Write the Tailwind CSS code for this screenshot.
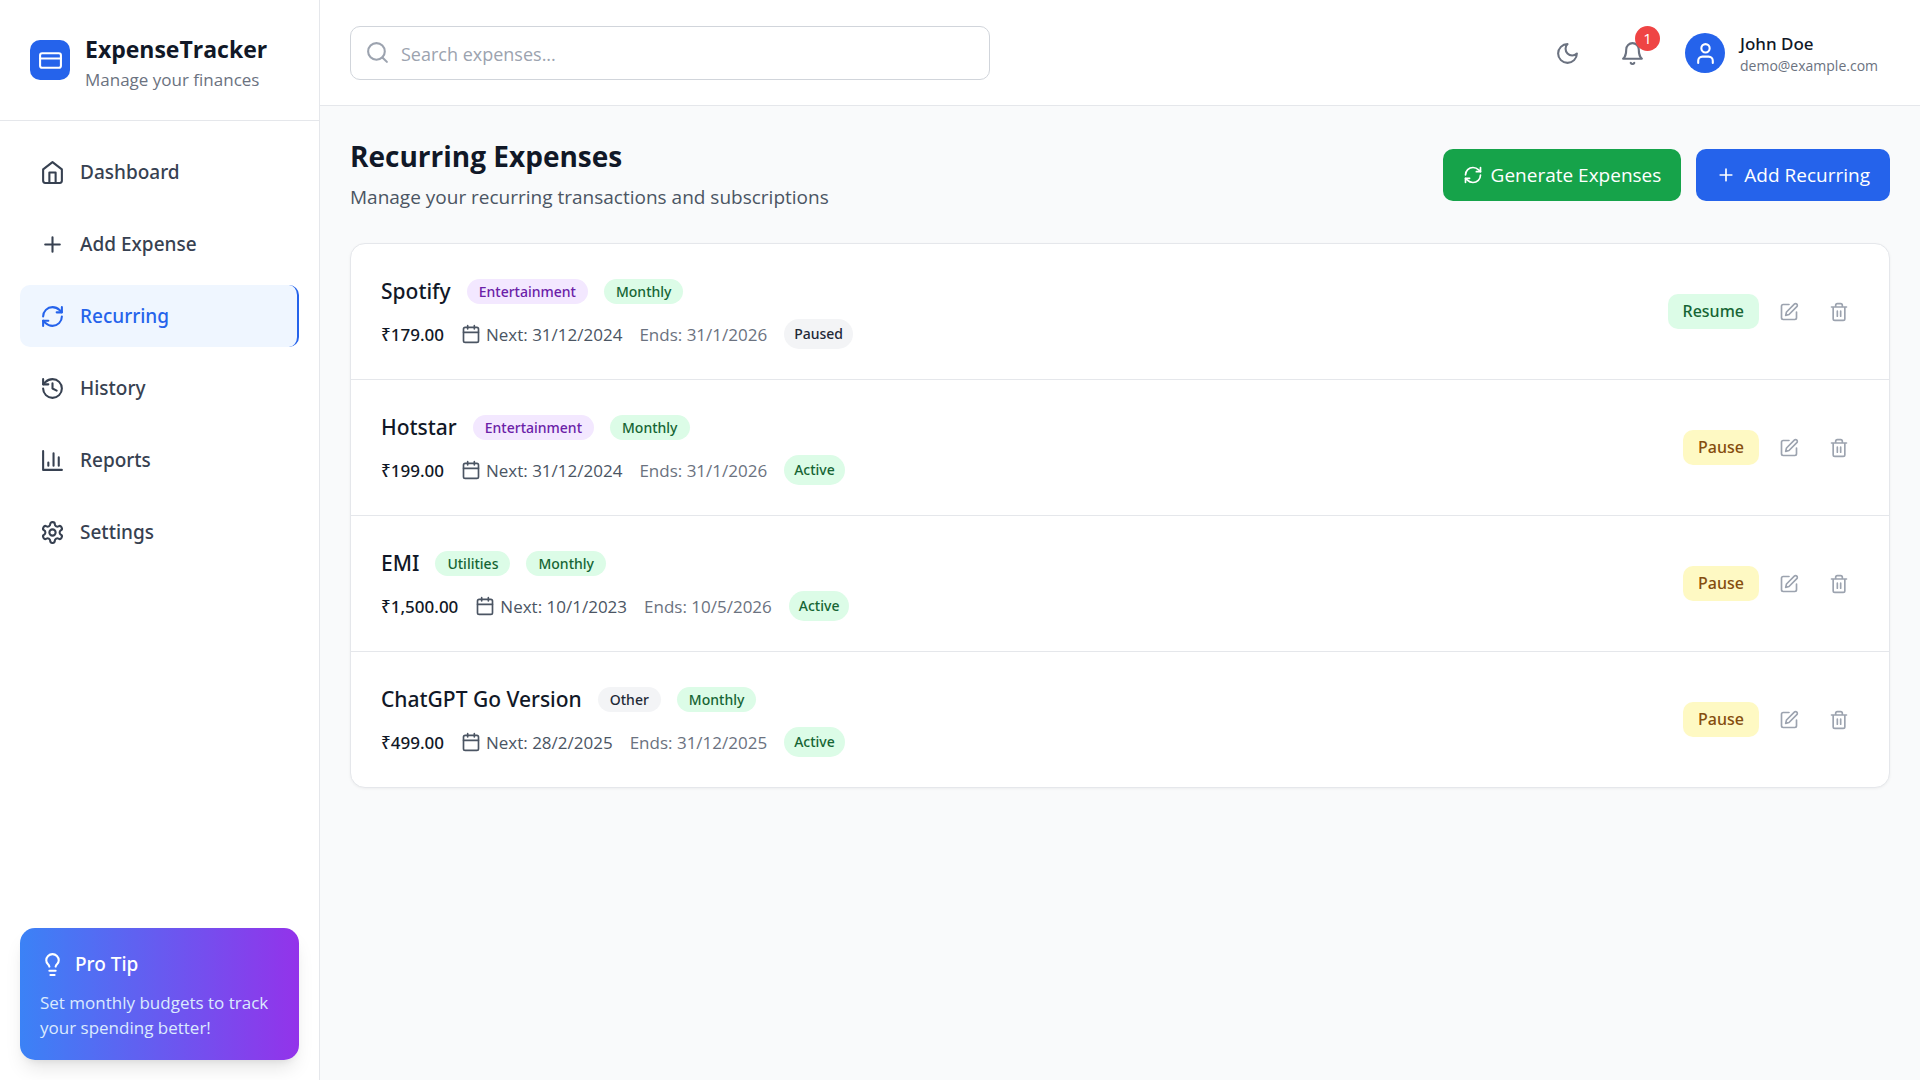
<!DOCTYPE html>
<html lang="en">
<head>
<meta charset="utf-8">
<meta name="viewport" content="width=device-width, initial-scale=1">
<title>ExpenseTracker</title>
<script src="https://cdn.jsdelivr.net/npm/@tailwindcss/browser@4"></script>
</head>
<body class="font-['Open_Sans','Noto_Sans',sans-serif] text-[#111827]">
<svg class="hidden" aria-hidden="true">
  <symbol id="card" viewBox="0 0 24 24"><rect x="2" y="5" width="20" height="14" rx="2"/><path d="M2 10h20"/></symbol>
  <symbol id="home" viewBox="0 0 24 24"><path d="m3 9 9-7 9 7v11a2 2 0 0 1-2 2H5a2 2 0 0 1-2-2z"/><path d="M9 22V12h6v10"/></symbol>
  <symbol id="plus" viewBox="0 0 24 24"><path d="M5 12h14M12 5v14"/></symbol>
  <symbol id="refresh" viewBox="0 0 24 24"><path d="M3 12a9 9 0 0 1 9-9 9.75 9.75 0 0 1 6.74 2.74L21 8"/><path d="M21 3v5h-5"/><path d="M21 12a9 9 0 0 1-9 9 9.75 9.75 0 0 1-6.74-2.74L3 16"/><path d="M8 16H3v5"/></symbol>
  <symbol id="history" viewBox="0 0 24 24"><path d="M3 12a9 9 0 1 0 9-9 9.75 9.75 0 0 0-6.74 2.74L3 8"/><path d="M3 3v5h5"/><path d="M12 7v5l4 2"/></symbol>
  <symbol id="chart" viewBox="0 0 24 24"><path d="M3 3v18h18M18 17V9M13 17V5M8 17v-3"/></symbol>
  <symbol id="settings" viewBox="0 0 24 24"><path d="M12.22 2h-.44a2 2 0 0 0-2 2v.18a2 2 0 0 1-1 1.73l-.43.25a2 2 0 0 1-2 0l-.15-.08a2 2 0 0 0-2.73.73l-.22.38a2 2 0 0 0 .73 2.73l.15.1a2 2 0 0 1 1 1.72v.51a2 2 0 0 1-1 1.74l-.15.09a2 2 0 0 0-.73 2.73l.22.38a2 2 0 0 0 2.73.73l.15-.08a2 2 0 0 1 2 0l.43.25a2 2 0 0 1 1 1.73V20a2 2 0 0 0 2 2h.44a2 2 0 0 0 2-2v-.18a2 2 0 0 1 1-1.73l.43-.25a2 2 0 0 1 2 0l.15.08a2 2 0 0 0 2.73-.73l.22-.39a2 2 0 0 0-.73-2.73l-.15-.08a2 2 0 0 1-1-1.74v-.5a2 2 0 0 1 1-1.74l.15-.09a2 2 0 0 0 .73-2.73l-.22-.38a2 2 0 0 0-2.73-.73l-.15.08a2 2 0 0 1-2 0l-.43-.25a2 2 0 0 1-1-1.73V4a2 2 0 0 0-2-2z"/><circle cx="12" cy="12" r="3"/></symbol>
  <symbol id="bulb" viewBox="0 0 24 24"><path d="M15 14c.2-1 .7-1.7 1.5-2.5 1-.9 1.5-2.2 1.5-3.5A6 6 0 0 0 6 8c0 1 .2 2.2 1.5 3.5.7.7 1.3 1.5 1.5 2.5"/><path d="M9 18h6M10 22h4"/></symbol>
  <symbol id="search" viewBox="0 0 24 24"><circle cx="11" cy="11" r="8"/><path d="m21 21-4.3-4.3"/></symbol>
  <symbol id="moon" viewBox="0 0 24 24"><path d="M12 3a6 6 0 0 0 9 9 9 9 0 1 1-9-9Z"/></symbol>
  <symbol id="bell" viewBox="0 0 24 24"><path d="M6 8a6 6 0 0 1 12 0c0 7 3 9 3 9H3s3-2 3-9"/><path d="M10.3 21a1.94 1.94 0 0 0 3.4 0"/></symbol>
  <symbol id="user" viewBox="0 0 24 24"><path d="M19 21v-2a4 4 0 0 0-4-4H9a4 4 0 0 0-4 4v2"/><circle cx="12" cy="7" r="4"/></symbol>
  <symbol id="calendar" viewBox="0 0 24 24"><rect x="3" y="4" width="18" height="18" rx="2"/><path d="M16 2v4M8 2v4M3 10h18"/></symbol>
  <symbol id="edit" viewBox="0 0 24 24"><path d="M12 3H5a2 2 0 0 0-2 2v14a2 2 0 0 0 2 2h14a2 2 0 0 0 2-2v-7"/><path d="M18.375 2.625a2.121 2.121 0 1 1 3 3L12 15l-4 1 1-4Z"/></symbol>
  <symbol id="trash" viewBox="0 0 24 24"><path d="M3 6h18M19 6v14c0 1-1 2-2 2H7c-1 0-2-1-2-2V6M8 6V4c0-1 1-2 2-2h4c1 0 2 1 2 2v2M10 11v6M14 11v6"/></symbol>
</svg>

<div class="flex min-h-screen bg-[#f9fafb]">
  <aside class="flex w-80 shrink-0 flex-col border-r border-[#e5e7eb] bg-white">
    <div class="flex h-[121px] items-center gap-[15px] border-b border-[#e5e7eb] px-[30px]">
      <div class="flex size-10 items-center justify-center rounded-[10px] bg-[#2563eb] text-white">
        <svg class="size-[25px] fill-none stroke-current stroke-2 [stroke-linecap:round] [stroke-linejoin:round]"><use href="#card"/></svg>
      </div>
      <div class="pt-[3px]">
        <p class="text-[23px] leading-[35px] font-bold">ExpenseTracker</p>
        <p class="text-[17px] leading-[25px] text-[#6b7280]">Manage your finances</p>
      </div>
    </div>
    <nav class="flex flex-col gap-[10px] p-5 font-['Noto_Sans',sans-serif] text-[19px] leading-[32px] font-medium text-[#374151]">
      <a href="#" class="flex items-center gap-[15px] rounded-[10px] px-5 py-[15px]"><svg class="size-[25px] fill-none stroke-current stroke-2 [stroke-linecap:round] [stroke-linejoin:round]"><use href="#home"/></svg>Dashboard</a>
      <a href="#" class="flex items-center gap-[15px] rounded-[10px] px-5 py-[15px]"><svg class="size-[25px] fill-none stroke-current stroke-2 [stroke-linecap:round] [stroke-linejoin:round]"><use href="#plus"/></svg>Add Expense</a>
      <a href="#" aria-current="page" class="flex items-center gap-[15px] rounded-[10px] border-r-2 border-[#2563eb] bg-[#eff6ff] px-5 py-[15px] text-[#2563eb]"><svg class="size-[25px] fill-none stroke-current stroke-2 [stroke-linecap:round] [stroke-linejoin:round]"><use href="#refresh"/></svg>Recurring</a>
      <a href="#" class="flex items-center gap-[15px] rounded-[10px] px-5 py-[15px]"><svg class="size-[25px] fill-none stroke-current stroke-2 [stroke-linecap:round] [stroke-linejoin:round]"><use href="#history"/></svg>History</a>
      <a href="#" class="flex items-center gap-[15px] rounded-[10px] px-5 py-[15px]"><svg class="size-[25px] fill-none stroke-current stroke-2 [stroke-linecap:round] [stroke-linejoin:round]"><use href="#chart"/></svg>Reports</a>
      <a href="#" class="flex items-center gap-[15px] rounded-[10px] px-5 py-[15px]"><svg class="size-[25px] fill-none stroke-current stroke-2 [stroke-linecap:round] [stroke-linejoin:round]"><use href="#settings"/></svg>Settings</a>
    </nav>
    <div class="mt-auto p-5">
      <section class="rounded-[15px] bg-linear-to-r/srgb from-[#3b82f6] to-[#9333ea] p-5 text-white shadow-[0_12px_19px_-4px_rgba(0,0,0,0.1),0_5px_8px_-5px_rgba(0,0,0,0.1)]">
        <h2 class="mb-[10px] flex items-center gap-[10px] font-['Noto_Sans',sans-serif] text-[19px] leading-[32px] font-medium"><svg class="size-[25px] fill-none stroke-current stroke-2 [stroke-linecap:round] [stroke-linejoin:round]"><use href="#bulb"/></svg>Pro Tip</h2>
        <p class="text-[17px] leading-[25px] text-[#dbeafe]">Set monthly budgets to track your spending better!</p>
      </section>
    </div>
  </aside>

  <div class="flex min-w-0 flex-1 flex-col">
    <header class="flex items-center justify-between border-b border-[#e5e7eb] bg-white pt-[26px] pr-10 pb-[25px] pl-[30px]">
      <div class="relative w-full max-w-[640px]">
        <svg class="absolute top-[14px] left-[15px] size-[25px] fill-none stroke-[#9ca3af] stroke-2 [stroke-linecap:round] [stroke-linejoin:round]"><use href="#search"/></svg>
        <input type="search" aria-label="Search expenses" placeholder="Search expenses..." class="block h-[54px] w-full rounded-[10px] border border-[#d1d5db] bg-white pt-px pr-5 pl-[50px] text-[18px] placeholder:text-[#9ca3af]">
      </div>
      <div class="flex items-center">
        <button type="button" aria-label="Toggle dark mode" class="flex size-[45px] items-center justify-center text-[#6b7280]"><svg class="size-[25px] fill-none stroke-current stroke-2 [stroke-linecap:round] [stroke-linejoin:round]"><use href="#moon"/></svg></button>
        <button type="button" aria-label="Notifications" class="relative ml-5 flex size-[45px] items-center justify-center text-[#6b7280]"><svg class="size-[25px] fill-none stroke-current stroke-2 [stroke-linecap:round] [stroke-linejoin:round]"><use href="#bell"/></svg><span class="absolute -top-[5px] -right-[5px] flex size-[25px] items-center justify-center rounded-full bg-[#ef4444] text-[15px] text-white">1</span></button>
        <button type="button" class="ml-[30px] flex items-center gap-[15px] text-left">
          <span class="flex size-10 items-center justify-center rounded-full bg-[#2563eb] text-white"><svg class="size-[25px] fill-none stroke-current stroke-2 [stroke-linecap:round] [stroke-linejoin:round]"><use href="#user"/></svg></span>
          <span class="min-w-[140px]">
            <span class="block font-['Noto_Sans',sans-serif] text-[17px] leading-[25px] font-medium">John Doe</span>
            <span class="block text-[14px] leading-5 text-[#6b7280]">demo@example.com</span>
          </span>
        </button>
      </div>
    </header>

    <main class="p-[30px]">
      <div class="mb-[30px] flex items-center justify-between">
        <div>
          <h1 class="text-[28px] leading-[40px] font-bold">Recurring Expenses</h1>
          <p class="mt-[5px] text-[19px] leading-[32px] text-[#4b5563]">Manage your recurring transactions and subscriptions</p>
        </div>
        <div class="flex gap-[15px] text-[19px] leading-[32px] text-white">
          <button type="button" class="flex items-center gap-2 rounded-[10px] bg-[#16a34a] px-5 py-[10px]"><svg class="size-5 fill-none stroke-current stroke-2 [stroke-linecap:round] [stroke-linejoin:round]"><use href="#refresh"/></svg>Generate Expenses</button>
          <button type="button" class="flex items-center gap-2 rounded-[10px] bg-[#2563eb] px-5 py-[10px]"><svg class="size-5 fill-none stroke-current stroke-2 [stroke-linecap:round] [stroke-linejoin:round]"><use href="#plus"/></svg>Add Recurring</button>
        </div>
      </div>

      <ul class="divide-y divide-[#e5e7eb] rounded-[15px] border border-[#e5e7eb] bg-white shadow-[0_1px_3px_rgba(0,0,0,0.05)]">
        <li class="flex items-center justify-between p-[30px]">
          <div>
            <div class="flex h-[35px] items-center gap-4 font-['Noto_Sans',sans-serif] text-[14px] leading-[25px] font-medium">
              <h3 class="text-[21px] leading-[35px]">Spotify</h3>
              <span class="rounded-full bg-[#f3e8ff] px-3 text-[#6b21a8]">Entertainment</span>
              <span class="rounded-full bg-[#dcfce7] px-3 text-[#166534]">Monthly</span>
            </div>
            <div class="mt-[10px] flex h-[30px] items-center gap-[17px] text-[17px] leading-[25px]">
              <span class="font-['Noto_Sans',sans-serif] font-medium">₹179.00</span>
              <span class="flex items-center gap-[5px] text-[#4b5563]"><svg class="size-5 fill-none stroke-current stroke-2 [stroke-linecap:round] [stroke-linejoin:round]"><use href="#calendar"/></svg>Next: 31/12/2024</span>
              <span class="text-[#6b7280]">Ends: 31/1/2026</span>
              <span class="rounded-full bg-[#f3f4f6] px-[10px] font-['Noto_Sans',sans-serif] text-[14px] leading-[30px] font-medium text-[#1f2937]">Paused</span>
            </div>
          </div>
          <div class="flex items-center gap-[10px] text-[#9ca3af]">
            <button type="button" class="rounded-[10px] bg-[#dcfce7] px-[15px] py-[5px] font-['Noto_Sans',sans-serif] text-[16px] leading-[25px] font-medium text-[#166534]">Resume</button>
            <button type="button" aria-label="Edit Spotify" class="p-[10px]"><svg class="size-5 fill-none stroke-current stroke-2 [stroke-linecap:round] [stroke-linejoin:round]"><use href="#edit"/></svg></button>
            <button type="button" aria-label="Delete Spotify" class="p-[10px]"><svg class="size-5 fill-none stroke-current stroke-2 [stroke-linecap:round] [stroke-linejoin:round]"><use href="#trash"/></svg></button>
          </div>
        </li>
        <li class="flex items-center justify-between p-[30px]">
          <div>
            <div class="flex h-[35px] items-center gap-4 font-['Noto_Sans',sans-serif] text-[14px] leading-[25px] font-medium">
              <h3 class="text-[21px] leading-[35px]">Hotstar</h3>
              <span class="rounded-full bg-[#f3e8ff] px-3 text-[#6b21a8]">Entertainment</span>
              <span class="rounded-full bg-[#dcfce7] px-3 text-[#166534]">Monthly</span>
            </div>
            <div class="mt-[10px] flex h-[30px] items-center gap-[17px] text-[17px] leading-[25px]">
              <span class="font-['Noto_Sans',sans-serif] font-medium">₹199.00</span>
              <span class="flex items-center gap-[5px] text-[#4b5563]"><svg class="size-5 fill-none stroke-current stroke-2 [stroke-linecap:round] [stroke-linejoin:round]"><use href="#calendar"/></svg>Next: 31/12/2024</span>
              <span class="text-[#6b7280]">Ends: 31/1/2026</span>
              <span class="rounded-full bg-[#dcfce7] px-[10px] font-['Noto_Sans',sans-serif] text-[14px] leading-[30px] font-medium text-[#166534]">Active</span>
            </div>
          </div>
          <div class="flex items-center gap-[10px] text-[#9ca3af]">
            <button type="button" class="rounded-[10px] bg-[#fef9c3] px-[15px] py-[5px] font-['Noto_Sans',sans-serif] text-[16px] leading-[25px] font-medium text-[#854d0e]">Pause</button>
            <button type="button" aria-label="Edit Hotstar" class="p-[10px]"><svg class="size-5 fill-none stroke-current stroke-2 [stroke-linecap:round] [stroke-linejoin:round]"><use href="#edit"/></svg></button>
            <button type="button" aria-label="Delete Hotstar" class="p-[10px]"><svg class="size-5 fill-none stroke-current stroke-2 [stroke-linecap:round] [stroke-linejoin:round]"><use href="#trash"/></svg></button>
          </div>
        </li>
        <li class="flex items-center justify-between p-[30px]">
          <div>
            <div class="flex h-[35px] items-center gap-4 font-['Noto_Sans',sans-serif] text-[14px] leading-[25px] font-medium">
              <h3 class="text-[21px] leading-[35px]">EMI</h3>
              <span class="rounded-full bg-[#dcfce7] px-3 text-[#166534]">Utilities</span>
              <span class="rounded-full bg-[#dcfce7] px-3 text-[#166534]">Monthly</span>
            </div>
            <div class="mt-[10px] flex h-[30px] items-center gap-[17px] text-[17px] leading-[25px]">
              <span class="font-['Noto_Sans',sans-serif] font-medium">₹1,500.00</span>
              <span class="flex items-center gap-[5px] text-[#4b5563]"><svg class="size-5 fill-none stroke-current stroke-2 [stroke-linecap:round] [stroke-linejoin:round]"><use href="#calendar"/></svg>Next: 10/1/2023</span>
              <span class="text-[#6b7280]">Ends: 10/5/2026</span>
              <span class="rounded-full bg-[#dcfce7] px-[10px] font-['Noto_Sans',sans-serif] text-[14px] leading-[30px] font-medium text-[#166534]">Active</span>
            </div>
          </div>
          <div class="flex items-center gap-[10px] text-[#9ca3af]">
            <button type="button" class="rounded-[10px] bg-[#fef9c3] px-[15px] py-[5px] font-['Noto_Sans',sans-serif] text-[16px] leading-[25px] font-medium text-[#854d0e]">Pause</button>
            <button type="button" aria-label="Edit EMI" class="p-[10px]"><svg class="size-5 fill-none stroke-current stroke-2 [stroke-linecap:round] [stroke-linejoin:round]"><use href="#edit"/></svg></button>
            <button type="button" aria-label="Delete EMI" class="p-[10px]"><svg class="size-5 fill-none stroke-current stroke-2 [stroke-linecap:round] [stroke-linejoin:round]"><use href="#trash"/></svg></button>
          </div>
        </li>
        <li class="flex items-center justify-between p-[30px]">
          <div>
            <div class="flex h-[35px] items-center gap-4 font-['Noto_Sans',sans-serif] text-[14px] leading-[25px] font-medium">
              <h3 class="text-[21px] leading-[35px]">ChatGPT Go Version</h3>
              <span class="rounded-full bg-[#f3f4f6] px-3 text-[#1f2937]">Other</span>
              <span class="rounded-full bg-[#dcfce7] px-3 text-[#166534]">Monthly</span>
            </div>
            <div class="mt-[10px] flex h-[30px] items-center gap-[17px] text-[17px] leading-[25px]">
              <span class="font-['Noto_Sans',sans-serif] font-medium">₹499.00</span>
              <span class="flex items-center gap-[5px] text-[#4b5563]"><svg class="size-5 fill-none stroke-current stroke-2 [stroke-linecap:round] [stroke-linejoin:round]"><use href="#calendar"/></svg>Next: 28/2/2025</span>
              <span class="text-[#6b7280]">Ends: 31/12/2025</span>
              <span class="rounded-full bg-[#dcfce7] px-[10px] font-['Noto_Sans',sans-serif] text-[14px] leading-[30px] font-medium text-[#166534]">Active</span>
            </div>
          </div>
          <div class="flex items-center gap-[10px] text-[#9ca3af]">
            <button type="button" class="rounded-[10px] bg-[#fef9c3] px-[15px] py-[5px] font-['Noto_Sans',sans-serif] text-[16px] leading-[25px] font-medium text-[#854d0e]">Pause</button>
            <button type="button" aria-label="Edit ChatGPT Go Version" class="p-[10px]"><svg class="size-5 fill-none stroke-current stroke-2 [stroke-linecap:round] [stroke-linejoin:round]"><use href="#edit"/></svg></button>
            <button type="button" aria-label="Delete ChatGPT Go Version" class="p-[10px]"><svg class="size-5 fill-none stroke-current stroke-2 [stroke-linecap:round] [stroke-linejoin:round]"><use href="#trash"/></svg></button>
          </div>
        </li>
      </ul>
    </main>
  </div>
</div>
</body>
</html>
